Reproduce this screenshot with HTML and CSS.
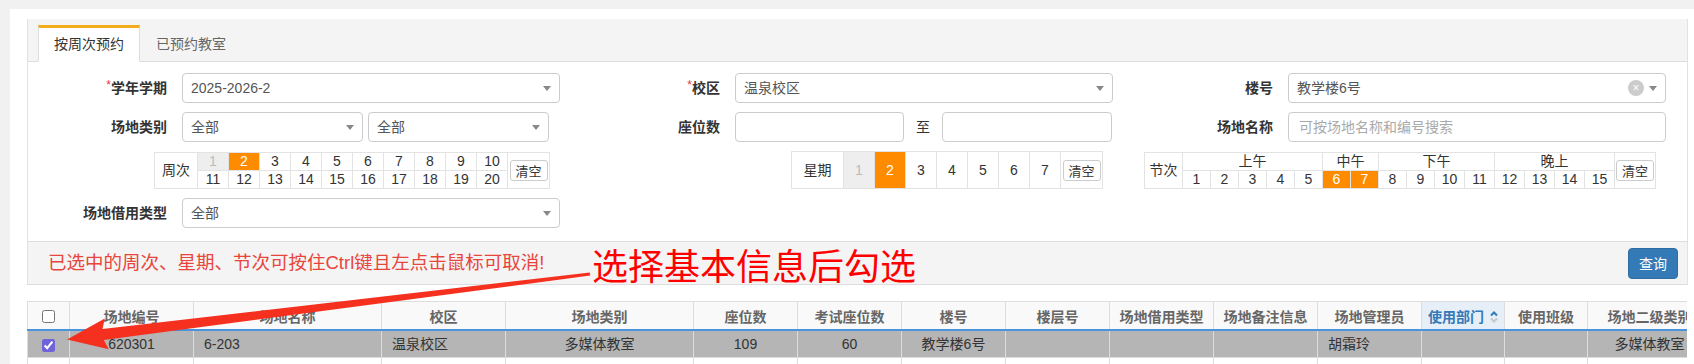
FILE: index.html
```html
<!DOCTYPE html>
<html lang="zh-CN">

<head>
    <meta charset="UTF-8">
    <meta name="viewport" content="width=device-width, initial-scale=1.0">
    <title>场地预约</title>
    <link rel="stylesheet" href="styles.css">
</head>

<body>

    <div class="page">
        <div class="tabs-box">
            <ul class="tab-nav">
                <li class="active">按周次预约</li>
                <li>已预约教室</li>
            </ul>

            <div class="form">
                <!-- row 1 -->
                <div class="group">
                    <label class="label"><span class="req">*</span>学年学期</label>
                    <div class="select"><span class="val">2025-2026-2</span><span class="caret"></span></div>
                </div>
                <div class="group">
                    <label class="label"><span class="req">*</span>校区</label>
                    <div class="select"><span class="val">温泉校区</span><span class="caret"></span></div>
                </div>
                <div class="group">
                    <label class="label">楼号</label>
                    <div class="select"><span class="val">教学楼6号</span><span class="clear-x">×</span><span class="caret"></span></div>
                </div>

                <!-- row 2 -->
                <div class="group">
                    <label class="label">场地类别</label>
                    <div class="pair">
                        <div class="select"><span class="val">全部</span><span class="caret"></span></div>
                        <div class="select"><span class="val">全部</span><span class="caret"></span></div>
                    </div>
                </div>
                <div class="group">
                    <label class="label">座位数</label>
                    <div class="range">
                        <input type="text" class="input">
                        <span class="to">至</span>
                        <input type="text" class="input">
                    </div>
                </div>
                <div class="group">
                    <label class="label">场地名称</label>
                    <input type="text" class="input wide" placeholder="可按场地名称和编号搜索">
                </div>

                <!-- row 3: pickers -->
                <div class="group picker">
                    <table class="pick week">
                        <colgroup><col class="w-head"><col span="10" class="w-num"><col class="w-clear"></colgroup>
                        <tr>
                            <td rowspan="2">周次</td>
                            <td class="off">1</td><td class="on">2</td><td>3</td><td>4</td><td>5</td>
                            <td>6</td><td>7</td><td>8</td><td>9</td><td>10</td>
                            <td rowspan="2"><button class="btn-clear">清空</button></td>
                        </tr>
                        <tr>
                            <td>11</td><td>12</td><td>13</td><td>14</td><td>15</td>
                            <td>16</td><td>17</td><td>18</td><td>19</td><td>20</td>
                        </tr>
                    </table>
                </div>
                <div class="group picker">
                    <table class="pick day">
                        <colgroup><col class="w-head"><col span="7" class="w-num"><col class="w-clear"></colgroup>
                        <tr>
                            <td>星期</td>
                            <td class="off">1</td><td class="on">2</td><td>3</td><td>4</td><td>5</td><td>6</td><td>7</td>
                            <td><button class="btn-clear">清空</button></td>
                        </tr>
                    </table>
                </div>
                <div class="group picker">
                    <table class="pick period">
                        <colgroup><col class="w-head"><col span="9" class="w-num"><col span="6" class="w-num2"><col class="w-clear"></colgroup>
                        <tr>
                            <td rowspan="2">节次</td>
                            <td colspan="5">上午</td>
                            <td colspan="2">中午</td>
                            <td colspan="4">下午</td>
                            <td colspan="4">晚上</td>
                            <td rowspan="2"><button class="btn-clear">清空</button></td>
                        </tr>
                        <tr>
                            <td>1</td><td>2</td><td>3</td><td>4</td><td>5</td>
                            <td class="on">6</td><td class="on">7</td>
                            <td>8</td><td>9</td><td>10</td><td>11</td>
                            <td>12</td><td>13</td><td>14</td><td>15</td>
                        </tr>
                    </table>
                </div>

                <!-- row 4 -->
                <div class="group">
                    <label class="label">场地借用类型</label>
                    <div class="select"><span class="val">全部</span><span class="caret"></span></div>
                </div>
            </div>

            <div class="info-bar">
                <span class="tip">已选中的周次、星期、节次可按住Ctrl键且左点击鼠标可取消!</span>
                <button class="btn-query">查询</button>
            </div>
        </div>

        <div class="table-wrap">
            <table class="grid">
                <colgroup>
                    <col class="c-check"><col class="c-md"><col class="c-lg"><col class="c-md"><col class="c-lg">
                    <col class="c-sm"><col class="c-sm"><col class="c-sm"><col class="c-sm"><col class="c-sm"><col class="c-sm"><col class="c-sm">
                    <col class="c-xs"><col class="c-xs"><col class="c-md">
                </colgroup>
                <thead>
                    <tr>
                        <th><input type="checkbox"></th>
                        <th>场地编号</th>
                        <th>场地名称</th>
                        <th>校区</th>
                        <th>场地类别</th>
                        <th>座位数</th>
                        <th>考试座位数</th>
                        <th>楼号</th>
                        <th>楼层号</th>
                        <th>场地借用类型</th>
                        <th>场地备注信息</th>
                        <th>场地管理员</th>
                        <th class="sorted">使用部门
                            <svg class="sort-icon" width="8" height="14" viewBox="0 0 8 14">
                                <path d="M1 5.5 L4 2.5 L7 5.5" fill="none" stroke="#337ab7" stroke-width="2"/>
                                <path d="M1 8.5 L4 11.5 L7 8.5" fill="none" stroke="#c8c8c8" stroke-width="2"/>
                            </svg>
                        </th>
                        <th>使用班级</th>
                        <th>场地二级类别</th>
                    </tr>
                </thead>
                <tbody>
                    <tr class="selected">
                        <td><input type="checkbox" checked></td>
                        <td class="center">620301</td>
                        <td>6-203</td>
                        <td>温泉校区</td>
                        <td class="center">多媒体教室</td>
                        <td class="center">109</td>
                        <td class="center">60</td>
                        <td class="center">教学楼6号</td>
                        <td></td>
                        <td></td>
                        <td></td>
                        <td>胡霜玲</td>
                        <td></td>
                        <td></td>
                        <td class="center">多媒体教室</td>
                    </tr>
                    <tr>
                        <td></td><td></td><td></td><td></td><td></td><td></td><td></td><td></td>
                        <td></td><td></td><td></td><td></td><td></td><td></td><td></td>
                    </tr>
                </tbody>
            </table>
        </div>

        <!-- screenshot annotation -->
        <div class="note">选择基本信息后勾选</div>
        <svg class="arrow" width="1694" height="364" viewBox="0 0 1694 364">
            <polygon points="589.7,272.5 102.5,329 104.8,318.5 67,339.5 108.8,349.3 103.8,340 590.3,275.5" fill="#f5301e"/>
        </svg>
    </div>

</body>

</html>
```

FILE: styles.css
```css
* {
    box-sizing: border-box;
}

body {
    margin: 0;
    background-color: #f1f1f1;
    font-family: "Liberation Sans", Arial, "Noto Sans CJK SC", sans-serif;
    font-size: 14px;
    line-height: 20px;
    color: #333;
    overflow: hidden;
}

.page {
    position: relative;
    margin: 9px 0 0 10px;
    padding: 10px 6px 0 17px;
    background-color: #fff;
    height: 400px;
}

.tabs-box {
    border-left: 1px solid #e2e2e2;
    border-right: 1px solid #e2e2e2;
}

/* tabs */
.tab-nav {
    display: flex;
    margin: 0;
    padding: 6px 0 0 10px;
    list-style: none;
    background-color: #f4f4f4;
    border-bottom: 1px solid #ddd;
    height: 43px;
}

.tab-nav li {
    padding: 0 15px;
    line-height: 33px;
    height: 37px;
    color: #666;
    border: 1px solid transparent;
    border-top: 3px solid transparent;
}

.tab-nav li.active {
    background-color: #fff;
    color: #333;
    border-color: #ddd;
    border-top-color: #f2ad1d;
    border-bottom-color: #fff;
}

/* form */
.form {
    display: grid;
    grid-template-columns: repeat(3, 1fr);
    row-gap: 9px;
    padding: 11px 0 13px;
}

.group {
    display: flex;
    align-items: center;
}

.label {
    width: 154px;
    flex: none;
    padding-right: 15px;
    text-align: right;
    font-weight: bold;
    color: #333;
}

.req {
    color: #e4393c;
    font-weight: normal;
    font-size: 12px;
    vertical-align: top;
    line-height: 14px;
}

.select {
    display: flex;
    align-items: center;
    width: 378px;
    height: 30px;
    padding: 0 8px 0 8px;
    border: 1px solid #ccc;
    border-radius: 4px;
    color: #555;
    background-color: #fff;
}

.select .val {
    flex: 1;
}

.caret {
    width: 0;
    height: 0;
    border-left: 4px solid transparent;
    border-right: 4px solid transparent;
    border-top: 5px solid #888;
}

.clear-x {
    width: 16px;
    height: 16px;
    margin-right: 5px;
    border-radius: 50%;
    background-color: #ccc;
    color: #fff;
    font-size: 12px;
    line-height: 16px;
    text-align: center;
}

.pair {
    display: flex;
    gap: 5px;
    width: 367px;
}

.pair .select {
    width: 181px;
}

.range {
    display: flex;
    align-items: center;
    width: 378px;
}

.range .to {
    margin: 0 12px;
    color: #333;
}

.input {
    width: 169px;
    height: 30px;
    padding: 0 10px;
    border: 1px solid #ccc;
    border-radius: 4px;
    font-family: inherit;
    font-size: 14px;
    color: #555;
}

.range .input:last-child {
    width: 170px;
}

.input.wide {
    width: 378px;
}

.input::placeholder {
    color: #aaa;
}

/* week / day / period pickers */
.picker {
    justify-content: flex-end;
    padding-right: 31px;
}

.pick {
    border-collapse: collapse;
    table-layout: fixed;
    text-align: center;
    color: #333;
}

.pick td {
    border: 1px solid #e3e3e3;
    padding: 0;
    height: 18px;
    line-height: 16px;
}

.pick td.on {
    background-color: #ff8c00;
    color: #fff;
}

.pick td.off {
    background-color: #eee;
    color: #bbb;
}

.pick .w-num {
    width: 31px;
}

.pick .w-clear {
    width: 42px;
}

.week .w-head {
    width: 43px;
}

.day .w-head {
    width: 52px;
}

.day td {
    height: 37px;
}

.period .w-head {
    width: 38px;
}

.period .w-num {
    width: 28px;
}

.period .w-num2 {
    width: 30px;
}

.period .w-clear {
    width: 41px;
}

.btn-clear {
    width: 38px;
    height: 21px;
    padding: 0;
    border: 1px solid #ccc;
    border-radius: 3px;
    background-color: #fff;
    font-family: inherit;
    font-size: 13px;
    color: #333;
}

/* tip bar */
.info-bar {
    display: flex;
    align-items: center;
    justify-content: space-between;
    height: 44px;
    padding: 0 9px 0 20px;
    background-color: #f4f4f4;
    border-top: 1px solid #ddd;
    border-bottom: 1px solid #ddd;
}

.tip {
    color: #e8453c;
    font-size: 18.5px;
}

.btn-query {
    width: 50px;
    height: 31px;
    border: 1px solid #2e6da4;
    border-radius: 4px;
    background-color: #337ab7;
    color: #fff;
    font-family: inherit;
    font-size: 14px;
}

/* result table */
.table-wrap {
    margin-top: 16px;
    width: 1660px;
    overflow: hidden;
}

.grid {
    width: 1684px;
    border-collapse: collapse;
    table-layout: fixed;
}

.grid .c-check { width: 42px; }
.grid .c-md { width: 124px; }
.grid .c-lg { width: 188px; }
.grid .c-sm { width: 104px; }
.grid .c-xs { width: 83px; }

.grid th {
    height: 28px;
    padding: 3px 0 0;
    background-color: #f9f9f9;
    border: 1px solid #ddd;
    border-bottom: 2px solid #4a94dc;
    color: #666;
    font-weight: bold;
    white-space: nowrap;
    overflow: hidden;
}

.grid th.sorted {
    background-color: #e6eef8;
    color: #337ab7;
}

.sort-icon {
    vertical-align: -2px;
    margin-left: 2px;
}

.grid td {
    height: 28px;
    padding: 0 10px;
    border-left: 1px solid #ddd;
    border-right: 1px solid #ddd;
    border-bottom: 1px solid #ddd;
    white-space: nowrap;
}

.grid td:first-child,
.grid th:first-child {
    padding: 0;
    text-align: center;
}

.grid td.center {
    text-align: center;
}

.grid tr.selected td {
    background-color: #b5b5b5;
}

.grid input[type="checkbox"] {
    width: 13px;
    height: 13px;
    margin: 0;
    vertical-align: middle;
    accent-color: #6f63d9;
}

/* annotation on the screenshot */
.note {
    position: absolute;
    left: 582px;
    top: 237px;
    font-family: "Noto Sans CJK SC", sans-serif;
    font-size: 36px;
    line-height: 36px;
    color: #ff0000;
}

.arrow {
    position: absolute;
    left: -10px;
    top: -9px;
    pointer-events: none;
}
```
